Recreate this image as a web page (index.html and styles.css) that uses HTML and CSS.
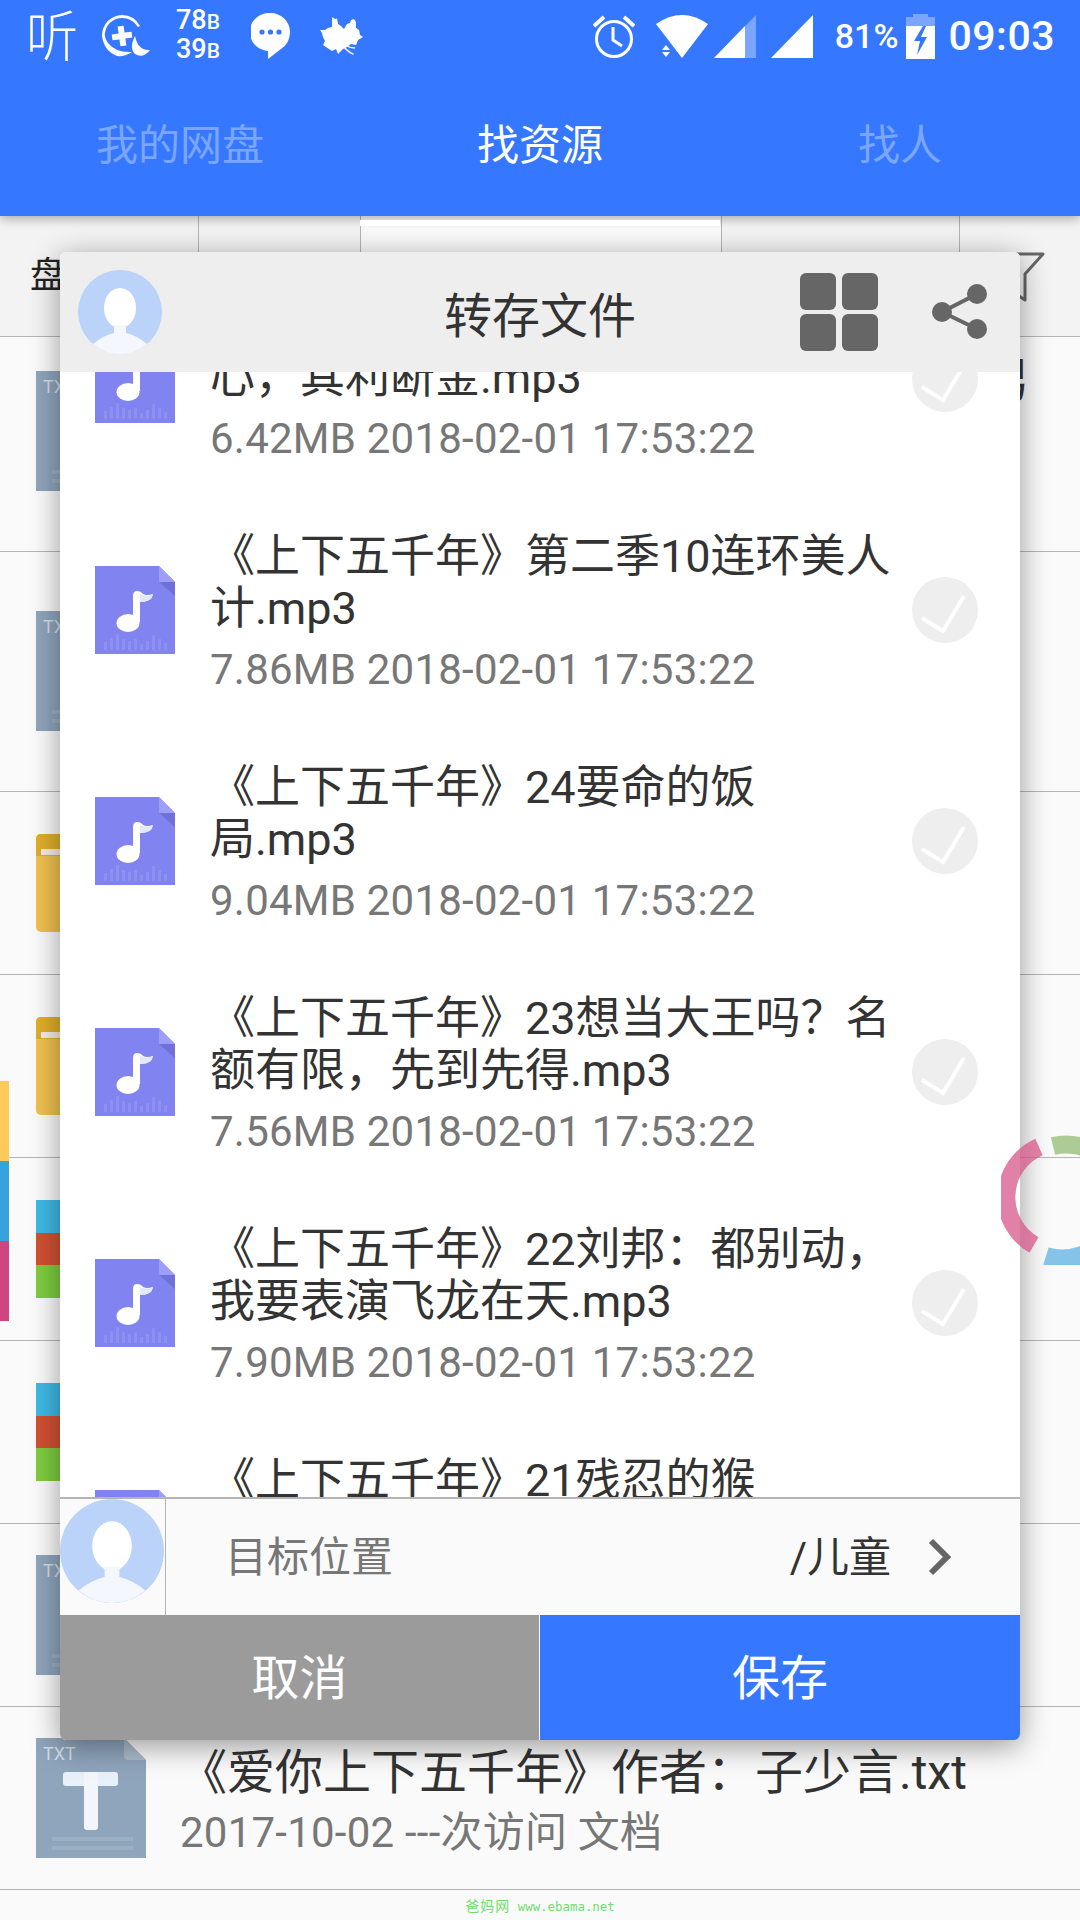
FILE: index.html
```html
<!DOCTYPE html>
<html lang="zh-CN">
<head>
  <meta charset="UTF-8" />
  <meta name="viewport" content="width=device-width, initial-scale=1.0"/>
  <title>转存文件</title>
  <link rel="stylesheet" href="styles.css">
</head>
<body>

  <svg class="sprite" width="0" height="0">
    <symbol id="i-music" viewBox="0 0 80 88">
      <path d="M0 0H64L80 16V88H0Z" fill="#8183f0"/>
      <path d="M64 16H80V30Z" fill="#6f71d8"/>
      <path d="M64 0L80 16H64Z" fill="#9c9ef8"/>
      <path d="M9 76h3v8H9zM15 72h3v12h-3zM21 68h3v16h-3zM27 73h3v11h-3zM33 75h3v9h-3zM39 73h3v11h-3zM45 78h3v6h-3zM51 75h3v9h-3zM57 69h3v15h-3zM63 73h3v11h-3zM69 77h3v7h-3z" fill="#fff" opacity=".1"/>
      <ellipse cx="33" cy="57" rx="11.5" ry="9" fill="#fff"/>
      <path d="M38 56V30Q38 25 42 25Q46 25 48 28Q52 30 58 28Q57 36 45 36V56Z" fill="#fff"/>
      <path d="M45 28Q52 31 58 28Q57 36 45 36Z" fill="#e4e8fb"/>
    </symbol>
    <symbol id="i-txt" viewBox="0 0 110 120">
      <path d="M0 0H88L110 22V120H0Z" fill="#8fa5bc"/>
      <path d="M88 0L110 22H92Q88 22 88 18Z" fill="#abbccd"/>
      <text x="7" y="22" class="icon-label">TXT</text>
      <rect x="27" y="34" width="55" height="14" rx="3" fill="#e8f0f9"/>
      <rect x="48" y="34" width="14" height="58" rx="3" fill="#f2f6fb"/>
      <rect x="16" y="99" width="81" height="4" fill="#fff" opacity=".12"/>
      <rect x="16" y="108" width="81" height="4" fill="#fff" opacity=".12"/>
    </symbol>
    <symbol id="i-folder" viewBox="0 0 110 98">
      <rect width="110" height="98" rx="5" fill="#f0c14f"/>
      <path d="M0 5Q0 0 5 0H105Q110 0 110 5V22H0Z" fill="#e0ae2a"/>
      <rect x="5" y="15" width="100" height="6" fill="#f6ece4"/>
    </symbol>
    <symbol id="i-bundle" viewBox="0 0 110 98">
      <rect width="110" height="33" fill="#3fb9e6"/>
      <rect y="33" width="110" height="32" fill="#d15133"/>
      <rect y="65" width="110" height="33" fill="#7fcc3f"/>
    </symbol>
    <symbol id="i-avatar" viewBox="0 0 84 84">
      <circle cx="42" cy="42" r="42" fill="#bbd2f9"/>
      <ellipse cx="42" cy="38" rx="16" ry="20" fill="#fff"/>
      <path d="M15 74Q24 66 36 63V55H48V63Q60 66 69 74Q57 84 42 84Q27 84 15 74Z" fill="#f4f8fe"/>
    </symbol>
    <symbol id="i-check" viewBox="0 0 66 66">
      <circle cx="33" cy="33" r="33" fill="#eee"/>
      <path d="M10 41L31 54L52 19" fill="none" stroke="#fff" stroke-width="4"/>
    </symbol>
  </svg>

  <div class="page">
    <header class="topbar">
      <div class="status">
        <span class="logo-ting">听</span>
        <svg class="st-moon" width="48" height="43" viewBox="0 0 48 43">
          <path d="M38 11Q32 0 20 0A20.5 20.5 0 0 0 0 21Q2 36 15 41Q23 42 30 37Q14 38 6 28Q2 22 3 18A17 17 0 0 1 20 3Q30 3 36 12Z" fill="#fff"/>
          <path d="M17 18v-7h6v7h7v6h-7v7h-6v-7h-7v-6z" fill="#fff" transform="rotate(-8 20 21)"/>
          <path d="M33 21Q27 33 33 39Q41 44 48 35Q36 36 33 21Z" fill="#fff"/>
        </svg>
        <div class="speed">
          <span>78<small>B</small></span>
          <span>39<small>B</small></span>
        </div>
        <svg class="st-chat" width="39" height="47" viewBox="0 0 39 47">
          <path d="M19.5 0A19.5 19 0 0 1 39 19Q39 30 30 36L17 46V38A19.5 19 0 0 1 19.5 0Z" fill="#fff"/>
          <circle cx="11" cy="19" r="2.6" fill="#3578ff"/>
          <circle cx="19.5" cy="19" r="2.6" fill="#3578ff"/>
          <circle cx="28" cy="19" r="2.6" fill="#3578ff"/>
        </svg>
        <svg class="st-leaf" width="44" height="40" viewBox="0 0 44 40">
          <path d="M12 1L15 3L17 2.5L18 8L21 10L24 13L27 8L30 7L31 4L34 3L36 6L36 12L39 14L40 19L43 21L38 24L36 29L31 28L27 31L23 33L18 38L16 33L12 35L9 33L6 31L3 29L5 25L3 21L2 17L0 14L5 14L8 12L12 11Z" fill="#fff"/>
          <path d="M23 30Q28 36 33.5 38.3M25 29Q30 32 35 32" fill="none" stroke="#fff" stroke-width="1.4"/>
        </svg>
        <div class="status-right">
          <svg width="42" height="44" viewBox="0 0 42 44">
            <circle cx="21" cy="25" r="17.5" fill="none" stroke="#fff" stroke-width="3"/>
            <path d="M20 13V26L29 32" fill="none" stroke="#fff" stroke-width="3"/>
            <path d="M1 12L11 3M41 12L31 3" stroke="#fff" stroke-width="4"/>
          </svg>
          <svg class="st-wifi" width="52" height="44" viewBox="0 0 52 44">
            <path d="M0 10Q26 -8 52 10L26 44Z" fill="#fff"/>
            <path d="M6 36L10 31L14 36ZM6 38L10 43L14 38Z" fill="#fff"/>
          </svg>
          <svg class="st-sig" width="42" height="43" viewBox="0 0 42 43">
            <path d="M0 43L42 0V43Z" fill="#7ba6ff"/>
            <path d="M0 43L31 11V43Z" fill="#fff"/>
          </svg>
          <svg class="st-sig2" width="42" height="43" viewBox="0 0 42 43">
            <path d="M0 43L42 0V43Z" fill="#fff"/>
          </svg>
          <span class="battery-pct">81%</span>
          <svg class="st-batt" width="29" height="45" viewBox="0 0 29 45">
            <path d="M7 0H22V3H29V45H0V3H7Z" fill="#7ba6ff"/>
            <path d="M0 12H29V45H0Z" fill="#fff"/>
            <path d="M17 12L8 27H14L11 41L21 23H15L20 12Z" fill="#3578ff"/>
          </svg>
          <span class="clock">09:03</span>
        </div>
      </div>
      <nav class="tabs">
        <div class="tab">我的网盘</div>
        <div class="tab active">找资源</div>
        <div class="tab">找人</div>
      </nav>
    </header>

    <div class="sortbar">
      <div class="sort-cell sort-first">盘</div>
      <div class="sort-cell"></div>
      <div class="sort-cell sort-active"></div>
      <div class="sort-cell"></div>
      <div class="sort-cell sort-last">
        <svg width="56" height="52" viewBox="0 0 56 52">
          <path d="M3 2H53L35 22V48L20 38V22Z" fill="none" stroke="#666" stroke-width="3" stroke-linejoin="round"/>
        </svg>
      </div>
    </div>

    <div class="rows">
      <div class="row row-a"><svg class="row-icon icon-tall"><use href="#i-txt"/></svg><span class="row-tail">男</span></div>
      <div class="row row-b"><svg class="row-icon icon-tall"><use href="#i-txt"/></svg></div>
      <div class="row"><svg class="row-icon"><use href="#i-folder"/></svg></div>
      <div class="row"><svg class="row-icon"><use href="#i-folder"/></svg></div>
      <div class="row"><svg class="row-icon"><use href="#i-bundle"/></svg></div>
      <div class="row"><svg class="row-icon"><use href="#i-bundle"/></svg></div>
      <div class="row"><svg class="row-icon icon-tall"><use href="#i-txt"/></svg></div>
      <div class="row">
        <svg class="row-icon icon-tall"><use href="#i-txt"/></svg>
        <div class="row-text">
          <div class="row-title">《爱你上下五千年》作者：子少言.txt</div>
          <div class="row-sub">2017-10-02 ---次访问 文档</div>
        </div>
      </div>
    </div>

    <div class="watermark"><span class="watermark-name">爸妈网</span> www.ebama.net</div>

    <div class="edge-tab">
      <span class="edge-yellow"></span>
      <span class="edge-blue"></span>
      <span class="edge-pink"></span>
    </div>

    <section class="dialog">
      <div class="dialog-head">
        <svg class="head-avatar"><use href="#i-avatar"/></svg>
        <h2 class="dialog-title">转存文件</h2>
        <div class="grid-btn"><i></i><i></i><i></i><i></i></div>
        <svg class="share-btn" width="55" height="56" viewBox="0 0 55 56">
          <path d="M45 10L10 28L45 45" fill="none" stroke="#666" stroke-width="4"/>
          <circle cx="45" cy="10" r="10" fill="#666"/>
          <circle cx="10" cy="28" r="10" fill="#666"/>
          <circle cx="45" cy="45" r="10" fill="#666"/>
        </svg>
      </div>

      <div class="file-scroll">
        <ul class="file-list">
          <li class="file">
            <svg class="file-icon"><use href="#i-music"/></svg>
            <div class="file-text">
              <div class="file-name">《上下五千年》第二季09兄弟同心，其利断金.mp3</div>
              <div class="file-meta">6.42MB 2018-02-01 17:53:22</div>
            </div>
            <svg class="file-check"><use href="#i-check"/></svg>
          </li>
          <li class="file">
            <svg class="file-icon"><use href="#i-music"/></svg>
            <div class="file-text">
              <div class="file-name">《上下五千年》第二季10连环美人计.mp3</div>
              <div class="file-meta">7.86MB 2018-02-01 17:53:22</div>
            </div>
            <svg class="file-check"><use href="#i-check"/></svg>
          </li>
          <li class="file">
            <svg class="file-icon"><use href="#i-music"/></svg>
            <div class="file-text">
              <div class="file-name">《上下五千年》24要命的饭局.mp3</div>
              <div class="file-meta">9.04MB 2018-02-01 17:53:22</div>
            </div>
            <svg class="file-check"><use href="#i-check"/></svg>
          </li>
          <li class="file">
            <svg class="file-icon"><use href="#i-music"/></svg>
            <div class="file-text">
              <div class="file-name">《上下五千年》23想当大王吗？名额有限，先到先得.mp3</div>
              <div class="file-meta">7.56MB 2018-02-01 17:53:22</div>
            </div>
            <svg class="file-check"><use href="#i-check"/></svg>
          </li>
          <li class="file">
            <svg class="file-icon"><use href="#i-music"/></svg>
            <div class="file-text">
              <div class="file-name">《上下五千年》22刘邦：都别动，我要表演飞龙在天.mp3</div>
              <div class="file-meta">7.90MB 2018-02-01 17:53:22</div>
            </div>
            <svg class="file-check"><use href="#i-check"/></svg>
          </li>
          <li class="file">
            <svg class="file-icon"><use href="#i-music"/></svg>
            <div class="file-text">
              <div class="file-name">《上下五千年》21残忍的猴子.mp3</div>
              <div class="file-meta">7.12MB 2018-02-01 17:53:22</div>
            </div>
            <svg class="file-check"><use href="#i-check"/></svg>
          </li>
        </ul>
      </div>

      <div class="target">
        <div class="target-avatar"><svg class="foot-avatar"><use href="#i-avatar"/></svg></div>
        <span class="target-label">目标位置</span>
        <span class="target-path">/儿童</span>
        <svg class="target-arrow" width="24" height="38" viewBox="0 0 24 38">
          <path d="M3 3L19 19L3 35" fill="none" stroke="#666" stroke-width="6"/>
        </svg>
      </div>

      <div class="actions">
        <div class="btn btn-cancel">取消</div>
        <div class="btn btn-save">保存</div>
      </div>
    </section>

    <svg class="float-ball" width="130" height="130" viewBox="0 0 130 130">
      <g fill="none" stroke-width="18">
        <path d="M38 12A55 55 0 0 0 33 110" stroke="#d9588a"/>
        <path d="M52 11A55 55 0 0 1 100 22" stroke="#94bc72"/>
        <path d="M45 121A55 55 0 0 0 105 102" stroke="#5fb3e2"/>
      </g>
    </svg>
  </div>

</body>
</html>
```

FILE: styles.css
```css
* {
  margin: 0;
  padding: 0;
  box-sizing: border-box;
}

body {
  background: #fafafa;
  font-family: Roboto, "Noto Sans CJK SC", sans-serif;
  color: #333;
}

.sprite {
  position: absolute;
}

.page {
  position: relative;
  width: 1080px;
  height: 1920px;
  overflow: hidden;
  background: #fafafa;
}

/* top bar */
.topbar {
  position: relative;
  z-index: 2;
  height: 216px;
  background: #3578ff;
  color: #fff;
  box-shadow: 0 3px 10px rgba(0, 0, 0, 0.3);
}

.status {
  display: flex;
  align-items: center;
  height: 72px;
  padding: 0 25px 0 25px;
}

.logo-ting {
  width: 54px;
  margin-right: 23px;
  font-size: 52px;
  font-weight: 300;
  line-height: 72px;
  text-align: center;
  transform: translateY(2px) scaleY(1.05);
}

.st-moon {
  margin-right: 26px;
}

.speed {
  display: flex;
  flex-direction: column;
  width: 44px;
  margin-right: 31px;
  font-size: 27px;
  font-weight: 500;
  line-height: 27px;
}

.speed small {
  font-size: 21px;
}

.st-chat {
  margin-right: 30px;
}

.status-right {
  display: flex;
  align-items: center;
  margin-left: auto;
}

.st-wifi {
  margin-left: 21px;
}

.st-sig {
  margin-left: 6px;
}

.st-sig2 {
  margin-left: 15px;
}

.battery-pct {
  margin-left: 22px;
  font-size: 34px;
  font-weight: 500;
}

.st-batt {
  margin-left: 8px;
}

.clock {
  margin-left: 13px;
  font-size: 41px;
  font-weight: 500;
  letter-spacing: 0.5px;
}

.tabs {
  display: grid;
  grid-template-columns: repeat(3, 360px);
  height: 144px;
}

.tab {
  font-size: 42px;
  line-height: 148px;
  text-align: center;
  color: #7ba6ff;
}

.tab.active {
  color: #fff;
  border-bottom: 6px solid #fff;
}

/* sort bar under the header */
.sortbar {
  display: grid;
  grid-template-columns: 199px 162px 361px 238px 120px;
  height: 121px;
  background: #f3f3f3;
  border-bottom: 1px solid #b4b4b4;
}

.sort-cell {
  border-right: 1px solid #b4b4b4;
}

.sort-first {
  padding-left: 30px;
  font-size: 36px;
  line-height: 120px;
  color: #222;
}

.sort-active {
  background: #fafafa;
}

.sort-last {
  padding: 36px 0 0 30px;
  border-right: none;
}

/* list behind the dialog */
.row {
  display: flex;
  align-items: center;
  height: 183px;
  padding-left: 36px;
  border-bottom: 1px solid #b4b4b4;
}

.row-a {
  height: 215px;
}

.row-a .row-icon {
  margin-bottom: 26px;
}

.row-b {
  height: 240px;
}

.row-b .row-icon {
  margin-bottom: 2px;
}

.row-icon {
  flex: none;
  width: 110px;
  height: 98px;
}

.row-icon.icon-tall {
  height: 120px;
}

.row-tail {
  margin-left: auto;
  margin-right: 50px;
  margin-bottom: 136px;
  font-size: 48px;
}

.row-text {
  margin-left: 34px;
  padding-top: 10px;
}

.row-title {
  margin-left: -1px;
  font-size: 48px;
  line-height: 56px;
}

.row-sub {
  margin-top: 4px;
  font-size: 42px;
  line-height: 56px;
  letter-spacing: 0.23px;
  color: #777;
}

.icon-label {
  font-family: Roboto, sans-serif;
  font-size: 18px;
  fill: #d3dde7;
}

.watermark {
  padding-top: 4px;
  font-family: "DejaVu Sans Mono", "Noto Sans CJK SC", monospace;
  font-size: 12.4px;
  line-height: 25px;
  text-align: center;
  color: #6fdc6f;
}

.watermark-name {
  font-size: 14px;
  letter-spacing: 1px;
}

/* colour strip on the left screen edge */
.edge-tab {
  position: absolute;
  left: 0;
  top: 1081px;
  display: flex;
  flex-direction: column;
  width: 9px;
}

.edge-tab span {
  height: 80px;
}

.edge-yellow {
  background: #fccb59;
}

.edge-blue {
  background: #36a2de;
}

.edge-pink {
  background: #d04580;
}

/* transfer dialog */
.dialog {
  position: absolute;
  z-index: 3;
  left: 60px;
  top: 252px;
  display: flex;
  flex-direction: column;
  width: 960px;
  height: 1488px;
  overflow: hidden;
  background: #fff;
  border-radius: 6px;
  box-shadow: 0 6px 30px rgba(0, 0, 0, 0.4);
}

.dialog-head {
  position: relative;
  z-index: 1;
  flex: none;
  display: flex;
  align-items: center;
  height: 120px;
  padding: 0 0 0 18px;
  background: #eee;
}

.head-avatar {
  width: 84px;
  height: 84px;
}

.dialog-title {
  position: absolute;
  left: 0;
  right: 0;
  font-size: 48px;
  font-weight: 400;
  text-align: center;
}

.grid-btn {
  display: grid;
  grid-template-columns: 36px 36px;
  grid-template-rows: 37px 37px;
  gap: 4px 6px;
  margin-left: auto;
}

.grid-btn i {
  background: #666;
  border-radius: 6px;
}

.share-btn {
  margin: 0 33px 0 54px;
}

.file-scroll {
  flex: 1;
  overflow: hidden;
}

.file-list {
  margin-top: -109px;
  list-style: none;
}

.file {
  display: flex;
  align-items: center;
  height: 231px;
  padding: 0 42px 0 35px;
}

.file-icon {
  flex: none;
  width: 80px;
  height: 88px;
}

.file-text {
  flex: 1;
  margin: 0 12px 0 35px;
  padding-top: 9px;
  min-width: 0;
}

.file-name {
  font-size: 45px;
  line-height: 52px;
}

.file-meta {
  margin-top: 7px;
  font-size: 42px;
  line-height: 56px;
  letter-spacing: 0.23px;
  color: #777;
}

.file-check {
  flex: none;
  width: 66px;
  height: 66px;
}

.target {
  flex: none;
  display: flex;
  align-items: center;
  height: 118px;
  background: #fafafa;
  border-top: 2px solid #b4b4b4;
  font-size: 42px;
}

.target-avatar {
  width: 106px;
  height: 116px;
  border-right: 1px solid #b4b4b4;
}

.foot-avatar {
  display: block;
  width: 104px;
  height: 104px;
}

.target-label {
  margin: 0 0 7px 59px;
  color: #777;
}

.target-path {
  margin: 0 0 7px auto;
}

.target-arrow {
  margin: 0 68px 0 37px;
}

.actions {
  flex: none;
  display: grid;
  grid-template-columns: 479px 480px;
  column-gap: 1px;
  height: 125px;
  font-size: 48px;
  line-height: 127px;
  text-align: center;
  color: #fff;
}

.btn-cancel {
  background: #9b9b9b;
}

.btn-save {
  background: #3578ff;
}

/* floating ball, half off the screen */
.float-ball {
  position: absolute;
  z-index: 4;
  left: 1001px;
  top: 1135px;
  opacity: 0.75;
}
```
